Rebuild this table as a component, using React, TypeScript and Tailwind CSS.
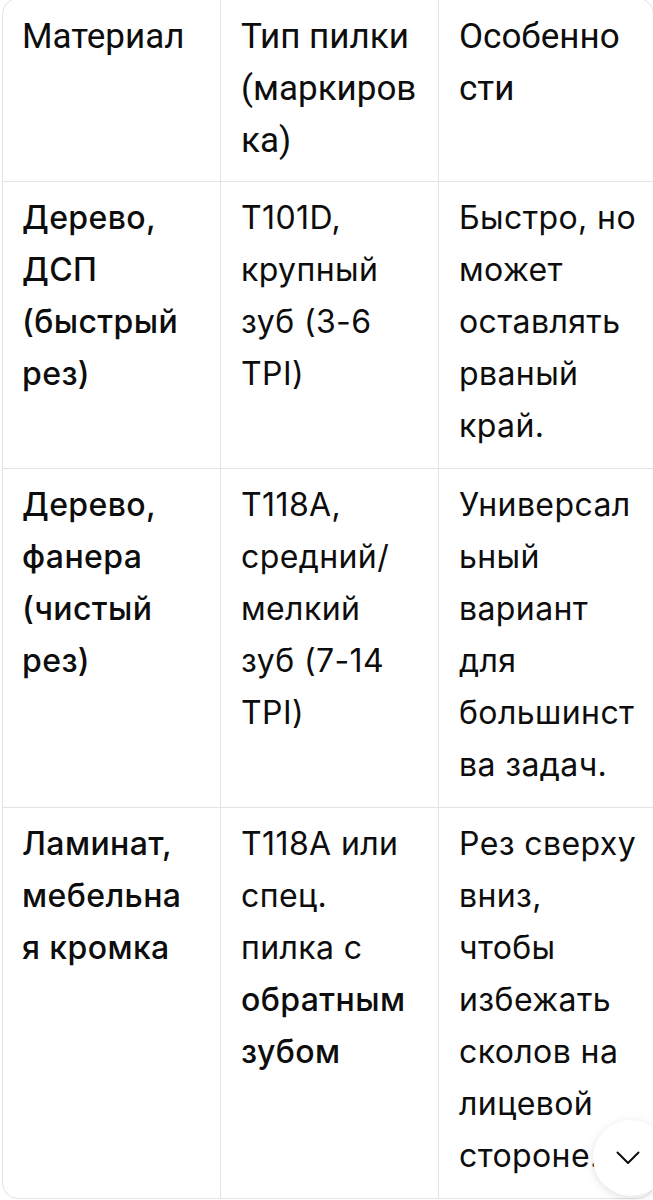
import React from "react";

type Cell = { lines: React.ReactNode[]; strong?: boolean };

const header: string[][] = [
  ["Материал"],
  ["Тип пилки", "(маркиров", "ка)"],
  ["Особенно", "сти"],
];

const rows: Cell[][] = [
  [
    { lines: ["Дерево,", "ДСП", "(быстрый", "рез)"], strong: true },
    { lines: ["T101D,", "крупный", "зуб (3-6", "TPI)"] },
    { lines: ["Быстро, но", "может", "оставлять", "рваный", "край."] },
  ],
  [
    { lines: ["Дерево,", "фанера", "(чистый", "рез)"], strong: true },
    { lines: ["T118A,", "средний/", "мелкий", "зуб (7-14", "TPI)"] },
    { lines: ["Универсал", "ьный", "вариант", "для", "большинст", "ва задач."] },
  ],
  [
    { lines: ["Ламинат,", "мебельна", "я кромка"], strong: true },
    {
      lines: [
        "T118A или",
        "спец.",
        "пилка с",
        <b key="b1" className="font-[550]">обратным</b>,
        <b key="b2" className="font-[550]">зубом</b>,
      ],
    },
    { lines: ["Рез сверху", "вниз,", "чтобы", "избежать", "сколов на", "лицевой", "стороне."] },
  ],
];

function Lines({ lines }: { lines: React.ReactNode[] }) {
  return (
    <>
      {lines.map((l, i) => (
        <div key={i} className="whitespace-nowrap">
          {l}
        </div>
      ))}
    </>
  );
}

export default function App() {
  return (
    <div className="relative w-[653px] h-[1200px] overflow-hidden bg-white text-[#0d0d0d]">
      <div
        className="ml-[2px] -mt-[2px] w-[652px] rounded-2xl border border-[#e3e3e3] overflow-hidden text-[32px] leading-[52px] tracking-[0.4px]"
        style={{ fontFamily: "Inter, 'Noto Sans', sans-serif" }}
      >
        <div
          className="grid grid-cols-[217px_218px_1fr] text-[35px] tracking-normal"
          style={{ fontFamily: "Roboto, 'Noto Sans', sans-serif" }}
        >
          {header.map((h, i) => (
            <div
              key={i}
              className={`pt-[12px] pb-[14px] ${i === 0 ? "pl-[19px]" : "pl-5 border-l border-[#e3e3e3]"}`}
            >
              <Lines lines={h} />
            </div>
          ))}
        </div>
        {rows.map((r, ri) => (
          <div key={ri} className="grid grid-cols-[217px_218px_1fr] border-t border-[#e3e3e3]">
            {r.map((c, ci) => (
              <div
                key={ci}
                className={`pt-[10px] pb-[16px] ${ci === 0 ? "pl-[19px]" : "pl-5 border-l border-[#e3e3e3]"} ${
                  c.strong ? "font-[550]" : ""
                }`}
              >
                <Lines lines={c.lines} />
              </div>
            ))}
          </div>
        ))}
      </div>

      <button className="absolute left-[593px] top-[1120px] w-[76px] h-[76px] rounded-full bg-white shadow-[0_2px_10px_rgba(0,0,0,0.12)] flex items-center justify-start pl-[23px]">
        <svg width="24" height="14" viewBox="0 0 24 14" fill="none">
          <path d="M1.5 1.5 L12 12 L22.5 1.5" stroke="#0d0d0d" strokeWidth="2" strokeLinecap="round" strokeLinejoin="round" />
        </svg>
      </button>
    </div>
  );
}
